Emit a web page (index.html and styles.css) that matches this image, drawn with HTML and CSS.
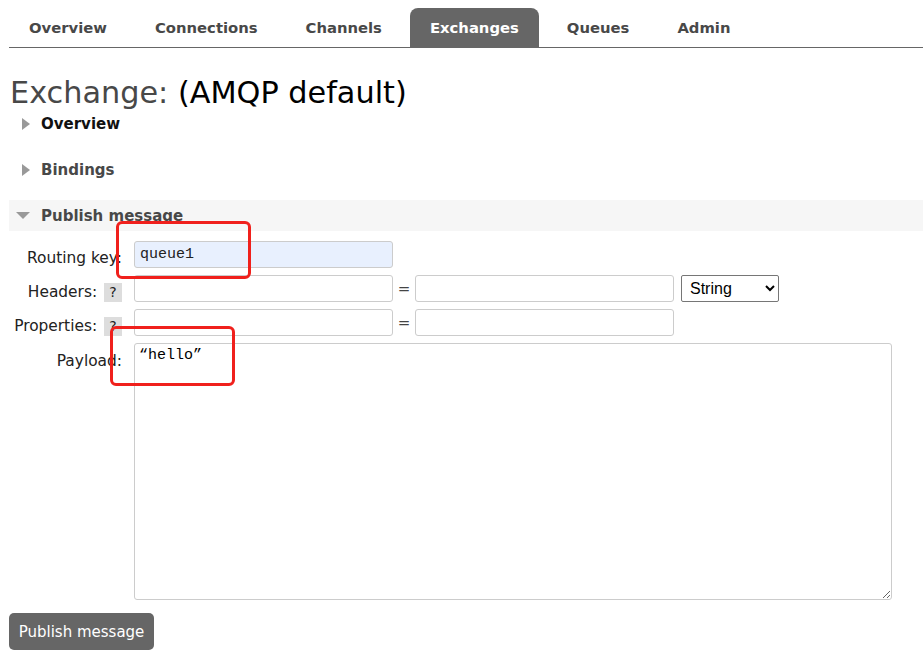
FILE: index.html
```html
<!DOCTYPE html>
<html>
<head>
<meta charset="utf-8">
<link rel="stylesheet" href="styles.css">
</head>
<body>
<div class="page">
  <ul class="tabs">
    <li class="tab">Overview</li>
    <li class="tab">Connections</li>
    <li class="tab">Channels</li>
    <li class="tab active">Exchanges</li>
    <li class="tab">Queues</li>
    <li class="tab">Admin</li>
  </ul>

  <h1 class="title"><span class="title-key">Exchange:</span> <span class="title-val">(AMQP default)</span></h1>

  <div class="section">
    <div class="section-head closed"><span class="tri-right"></span><span class="head-text dark">Overview</span></div>
  </div>
  <div class="section">
    <div class="section-head closed"><span class="tri-right"></span><span class="head-text">Bindings</span></div>
  </div>
  <div class="section">
    <div class="section-head open"><span class="tri-down"></span><span class="head-text">Publish message</span></div>
    <div class="form">
      <div class="row">
        <div class="label">Routing key:</div>
        <div class="fields"><input class="input filled" type="text" value="queue1"></div>
      </div>
      <div class="row">
        <div class="label">Headers: <span class="help">?</span></div>
        <div class="fields">
          <input class="input" type="text">
          <span class="eq">=</span>
          <input class="input" type="text">
          <select class="select"><option>String</option></select>
        </div>
      </div>
      <div class="row">
        <div class="label">Properties: <span class="help">?</span></div>
        <div class="fields">
          <input class="input" type="text">
          <span class="eq">=</span>
          <input class="input" type="text">
        </div>
      </div>
      <div class="row">
        <div class="label payload-label">Payload:</div>
        <div class="fields"><textarea class="textarea">“hello”</textarea></div>
      </div>
    </div>
    <button class="button">Publish message</button>
  </div>

  <div class="mark mark-1"></div>
  <div class="mark mark-2"></div>
</div>
</body>
</html>
```
FILE: styles.css
```css
html, body {
  margin: 0;
  padding: 0;
  background: #fff;
}
body {
  font-family: "DejaVu Sans", Verdana, sans-serif;
  color: #222;
}
.page {
  position: relative;
  padding: 8px 0 0 9px;
  width: 914px;
}
.tabs {
  list-style: none;
  margin: 0;
  padding: 0;
  display: flex;
  border-bottom: 1px solid #666;
  height: 39px;
}
.tab {
  padding: 0 20px;
  margin-right: 8px;
  height: 39px;
  line-height: 40px;
  font-weight: bold;
  font-size: 14.8px;
  color: #484848;
  border-radius: 8px 8px 0 0;
}
.tab.active {
  background: #666;
  color: #fff;
}
.title {
  margin: 30px 0 0 1px;
  font-size: 30.3px;
  font-weight: normal;
  line-height: 30px;
}
.title-key { color: #484848; }
.title-val { color: #000; }
.section-head {
  display: flex;
  align-items: center;
  height: 31px;
  margin-bottom: 15px;
}
.head-text {
  font-weight: bold;
  font-size: 15px;
  color: #484848;
  padding-top: 1px;
}
.head-text.dark { color: #111; }
.tri-right {
  width: 0;
  height: 0;
  border-top: 6px solid transparent;
  border-bottom: 6px solid transparent;
  border-left: 8px solid #999;
  margin: 0 11px 0 13px;
}
.section-head.open {
  background: #f6f6f6;
  margin-bottom: 10px;
}
.section-head.open .head-text { padding-top: 0; }
.tri-down {
  width: 0;
  height: 0;
  border-left: 7px solid transparent;
  border-right: 7px solid transparent;
  border-top: 7px solid #999;
  margin: 0 11px 0 7px;
}
.form {
  display: flex;
  flex-direction: column;
  gap: 7px;
}
.row {
  display: flex;
  align-items: flex-start;
  gap: 12px;
}
.label {
  width: 113px;
  padding-top: 8px;
  text-align: right;
  font-size: 15.4px;
  line-height: 18px;
  color: #222;
  white-space: nowrap;
}
.payload-label {
  padding-top: 9px;
}
.help {
  display: inline-block;
  background: #ddd;
  width: 18px;
  height: 19px;
  line-height: 19px;
  text-align: center;
  font-size: 14px;
  vertical-align: middle;
  margin-left: 2px;
}
.fields {
  display: flex;
  align-items: center;
}
.input {
  box-sizing: border-box;
  width: 259px;
  height: 27px;
  border: 1px solid #ccc;
  border-radius: 3px;
  padding: 2px 5px;
  font-family: "Liberation Mono", monospace;
  font-size: 15px;
  color: #222;
  background: #fff;
  margin: 0;
}
.input.filled {
  background: #e8f0fe;
}
.eq {
  width: 22px;
  text-align: center;
  font-size: 15px;
  color: #444;
}
.select {
  box-sizing: border-box;
  margin-left: 7px;
  width: 98px;
  height: 27px;
  font-family: "Liberation Sans", Arial, sans-serif;
  font-size: 16px;
  color: #000;
  border: 1px solid #767676;
  border-radius: 2px;
  background: #fff;
  padding: 0 4px;
}
.textarea {
  box-sizing: border-box;
  width: 758px;
  height: 257px;
  border: 1px solid #ccc;
  border-radius: 3px;
  padding: 3px 4px;
  font-family: "Liberation Mono", monospace;
  font-size: 15px;
  color: #000;
  margin: 0;
  display: block;
}
.button {
  display: block;
  margin-top: 13px;
  width: 145px;
  height: 37px;
  background: #666;
  color: #fff;
  border: none;
  border-radius: 5px;
  font-family: "DejaVu Sans", Verdana, sans-serif;
  font-size: 15px;
  padding: 0;
}
.mark {
  position: absolute;
  border: 3px solid #f0201c;
  border-radius: 6px;
  box-sizing: border-box;
}
.mark-1 {
  left: 116px;
  top: 221px;
  width: 135px;
  height: 58px;
}
.mark-2 {
  left: 110px;
  top: 326px;
  width: 125px;
  height: 60px;
}
```
